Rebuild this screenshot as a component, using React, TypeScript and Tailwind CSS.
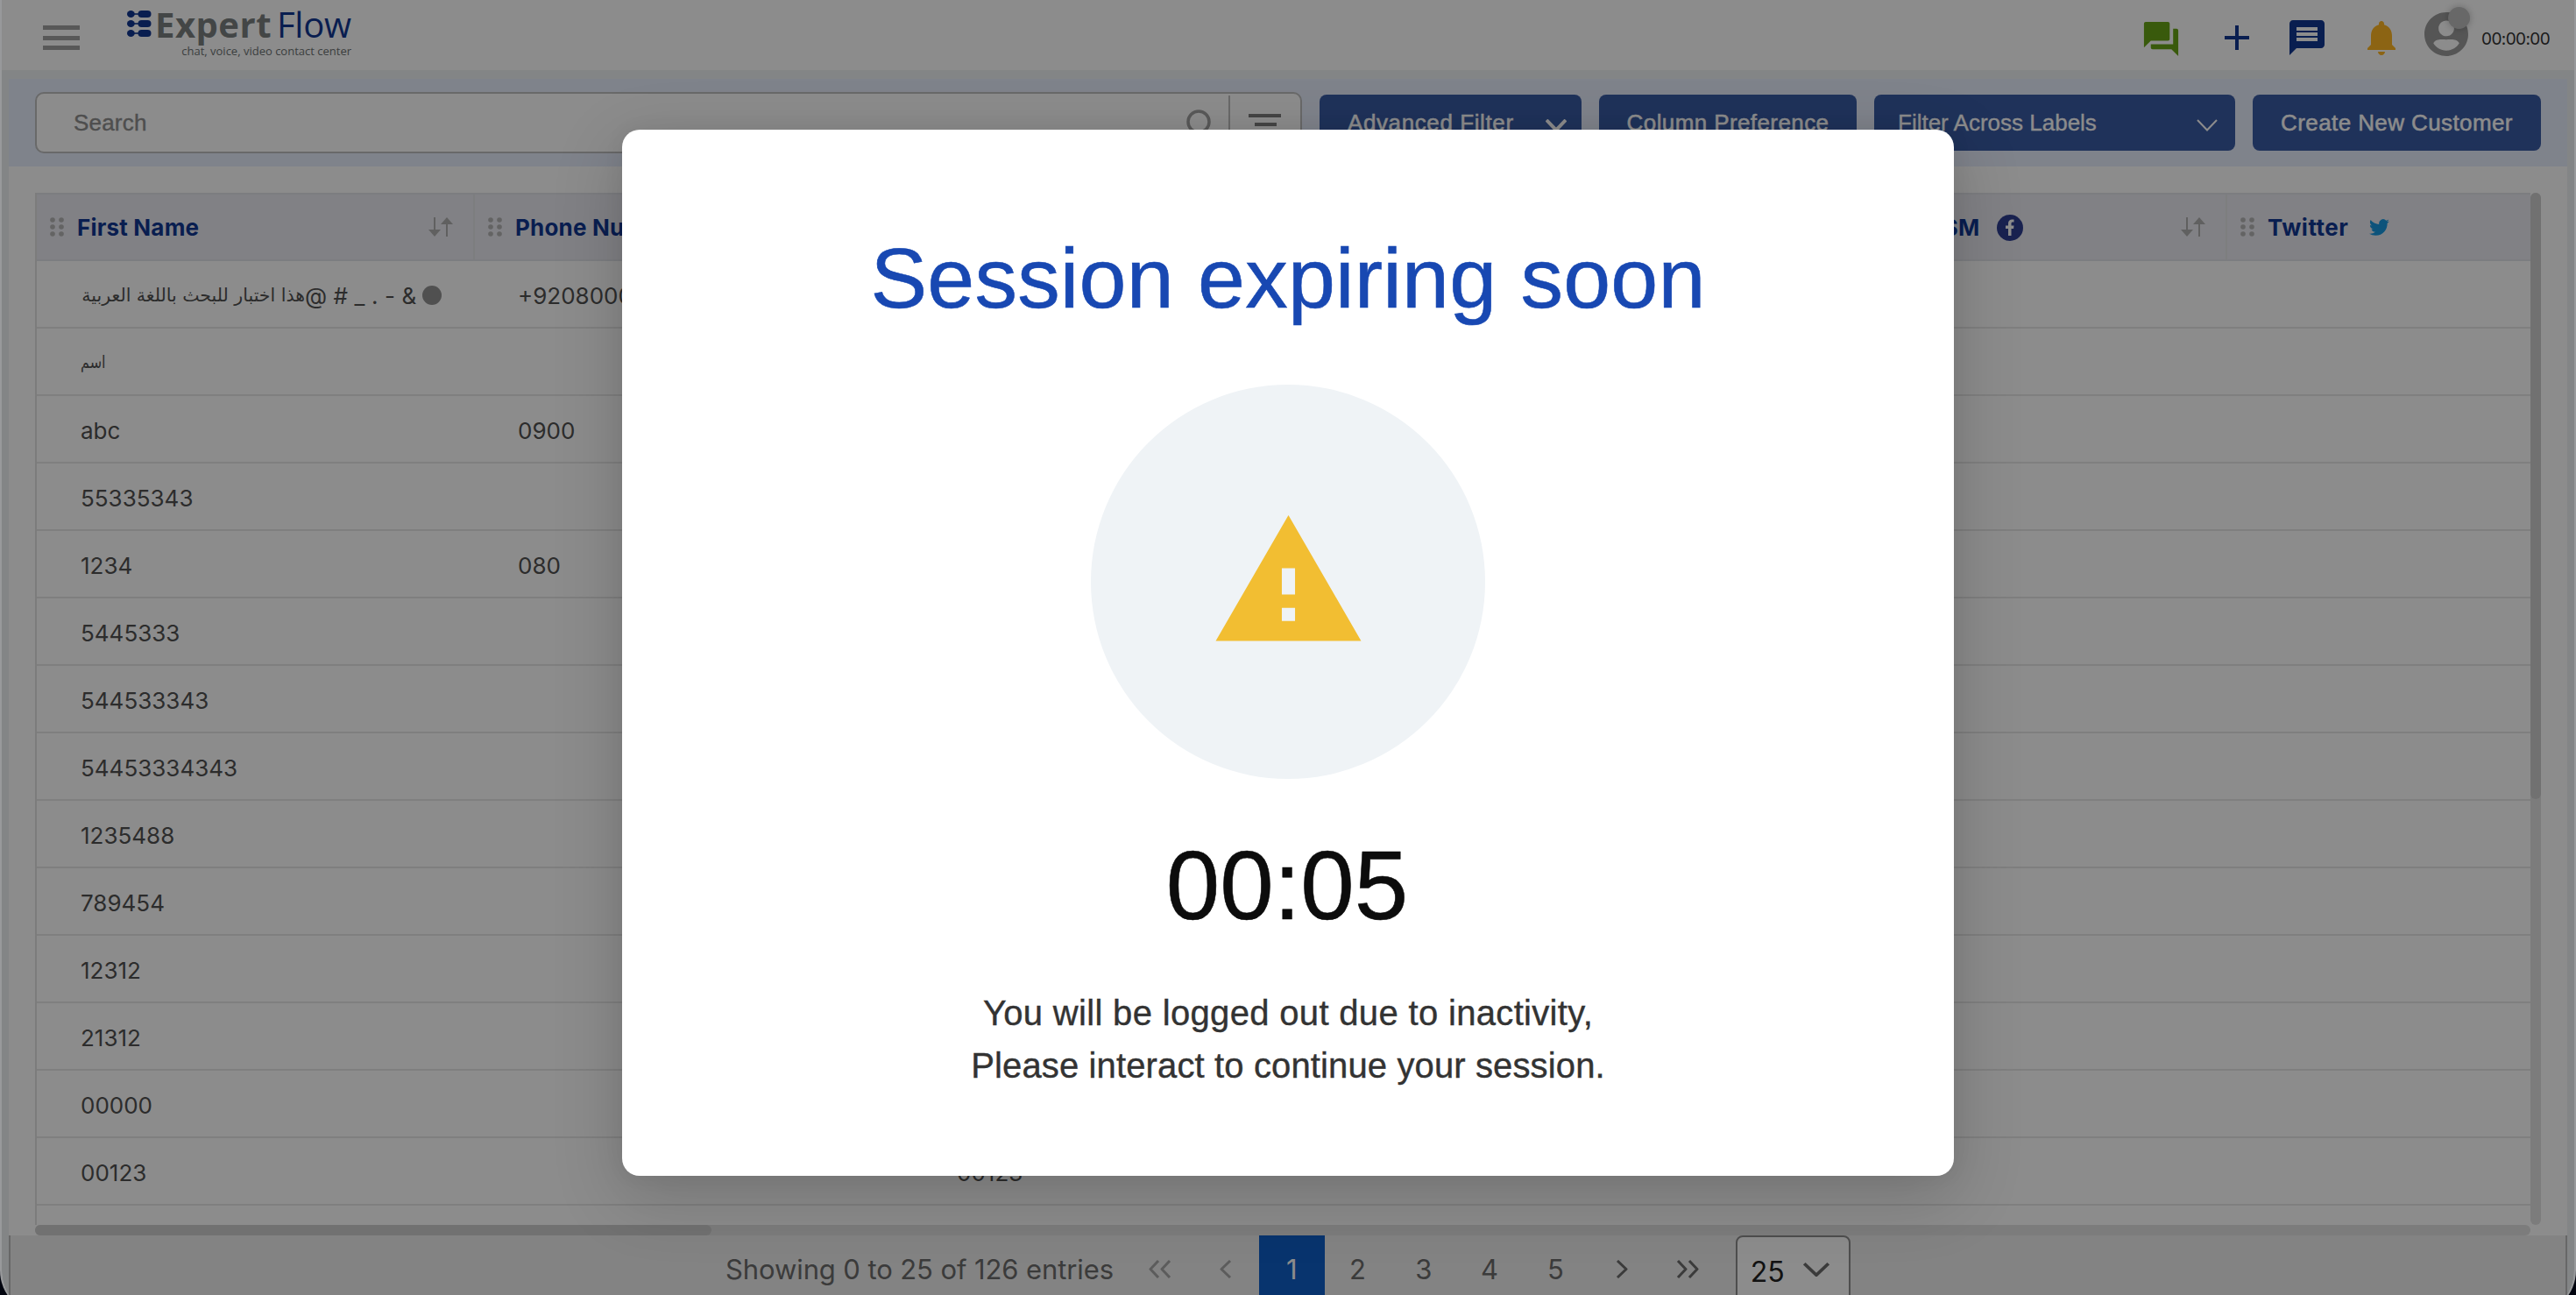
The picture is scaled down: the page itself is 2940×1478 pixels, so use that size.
import React from "react";

const FIRST_NAMES = [
  "اسم", "abc", "55335343", "1234", "5445333", "544533343", "54453334343",
  "1235488", "789454", "12312", "21312", "00000", "00123", "",
];
const PHONES: Record<number, string> = { 1: "0900", 3: "080" };
const THIRD: Record<number, string> = { 12: "00123" };

function Grip() {
  return (
    <svg className="h-[22px] w-4 shrink-0" viewBox="0 0 16 22" fill="#b4b4b4">
      {[3, 11, 19].map((y) => (
        <g key={y}><circle cx="3" cy={y} r="2.8" /><circle cx="13" cy={y} r="2.8" /></g>
      ))}
    </svg>
  );
}

function Sort() {
  return (
    <svg className="h-[22px] w-7 shrink-0" viewBox="0 0 28 22" fill="#b0b0b0">
      <path d="M6 0h2v14h6l-7 8-7-8h6z" />
      <path d="M20 22h2V8h6l-7-8-7 8h6z" />
    </svg>
  );
}

function Chevron({ className, width }: { className: string; width: number }) {
  return (
    <svg className={className} viewBox="0 0 24 14" preserveAspectRatio="none" fill="none" stroke="currentColor" strokeWidth={width}>
      <path d="M1 1l11 11.5L23 1" />
    </svg>
  );
}

function Angle({ flip, double, muted }: { flip?: boolean; double?: boolean; muted?: boolean }) {
  return (
    <span className={muted ? "flex w-[75.3px] justify-center text-[#a8a8a8]" : "flex w-[75.3px] justify-center text-[#6c6c6c]"}>
      <svg className={flip ? "h-[21px] w-[26px] -scale-x-100" : "h-[21px] w-[26px]"} viewBox="0 0 26 21" fill="none" stroke="currentColor" strokeWidth="3" strokeLinejoin="round">
        {double ? <path d="M2 1l9 9.5L2 20M15 1l9 9.5L15 20" /> : <path d="M8 1l10 9.5L8 20" />}
      </svg>
    </span>
  );
}

function Logo() {
  return (
    <div className="ml-[54px] mt-[7px] w-[256px]">
      <div className="flex h-[42px] items-center">
        <svg className="mt-[-2px] h-[30px] w-7 shrink-0" viewBox="0 0 28 30" fill="#123892">
          {[4, 15, 26].map((y) => (
            <g key={y}>
              <ellipse cx="4.4" cy={y} rx="4.4" ry="4" />
              <rect x="8" y={y - 0.8} width="6" height="1.6" />
              <rect x="12.5" y={y - 4} width="15" height="8" rx="4" />
            </g>
          ))}
        </svg>
        <span className="ml-1 w-[139px] whitespace-nowrap font-['Open_Sans'] text-[40px] font-bold leading-[42px] tracking-[0.5px] text-[#7a8080]">Expert</span>
        <span className="whitespace-nowrap font-['Open_Sans'] text-[40px] leading-[42px] tracking-[-0.3px] text-[#123892]">Flow</span>
      </div>
      <div className="text-right font-['Open_Sans'] text-[13px] leading-[18px] text-[#6d7373]">chat, voice, video contact center</div>
    </div>
  );
}

function Header() {
  return (
    <header className="flex h-20 shrink-0 bg-white">
      <div className="ml-[47px] mt-[29px] flex h-7 w-[42px] flex-col justify-between">
        <i className="h-[5px] bg-[#a0a0a0]" /><i className="h-[5px] bg-[#a0a0a0]" /><i className="h-[5px] bg-[#a0a0a0]" />
      </div>
      <Logo />
      <div className="ml-auto flex pr-[29px]">
        <svg className="mt-[21px] h-[47px] w-[47px]" viewBox="0 0 24 24" fill="#69a416">
          <path d="M21 6h-2v9H6v2c0 .55.45 1 1 1h11l4 4V7c0-.55-.45-1-1-1zm-4 6V3c0-.55-.45-1-1-1H3c-.55 0-1 .45-1 1v14l4-4h10c.55 0 1-.45 1-1z" />
        </svg>
        <svg className="ml-[39px] mt-[19px] h-12 w-12" viewBox="0 0 24 24" fill="#123892"><path d="M19 13h-6v6h-2v-6H5v-2h6V5h2v6h6v2z" /></svg>
        <svg className="ml-[32px] mt-[19px] h-12 w-12" viewBox="0 0 24 24" fill="#123892">
          <path d="M20 2H4c-1.1 0-1.99.9-1.99 2L2 22l4-4h14c1.100 0 2-.9 2-2V4c0-1.100-.9-2-2-2zm-2 12H6v-2h12v2zm0-3H6V9h12v2zm0-3H6V6h12v2z" />
        </svg>
        <svg className="ml-[37px] mt-[19px] h-12 w-12" viewBox="0 0 24 24" fill="#ffb624">
          <path d="M12 22c1.100 0 2-.9 2-2h-4c0 1.100.89 2 2 2zm6-6v-5c0-3.070-1.640-5.640-4.500-6.320V4c0-.83-.67-1.500-1.500-1.500s-1.500.67-1.500 1.500v.68C7.630 5.360 6 7.920 6 11v5l-2 2v1h16v-1l-2-2z" />
        </svg>
        <div className="relative ml-5 mt-[9px] h-[60px] w-[60px]">
          <svg viewBox="0 0 24 24" fill="#9c9c9c"><path d="M12 2C6.480 2 2 6.480 2 12s4.480 10 10 10 10-4.480 10-10S17.520 2 12 2zm0 3.800c1.960 0 3.550 1.590 3.550 3.550s-1.590 3.550-3.550 3.550-3.550-1.590-3.550-3.550 1.590-3.550 3.550-3.550zm0 13.700c-2.500 0-4.900-1.500-5.900-3.400 1.300-2.200 3.800-1.600 5.900-1.600s4.600-.6 5.900 1.600c-1 1.900-3.400 3.400-5.900 3.400z" /></svg>
          <i className="absolute left-[32px] top-[-1px] h-[25px] w-[25px] rounded-full bg-[#bdbdbd] shadow-[0_0_6px_2px_rgba(0,0,0,0.15)]" />
        </div>
        <span className="ml-[10px] mt-[33px] w-[77px] whitespace-nowrap text-[19px] leading-6 tracking-[-0.6px] text-[#333]">00:00:00</span>
      </div>
    </header>
  );
}

const btn = "flex h-16 shrink-0 items-center rounded-lg bg-[#3a5ba4] whitespace-nowrap text-[26px] text-white";

function Toolbar() {
  return (
    <div className="flex h-[100px] shrink-0 items-start bg-[#e7eefd] pl-[30px] pt-[15px] font-['Liberation_Sans',sans-serif]">
      <div className="flex h-[70px] w-[1446px] items-center rounded-[10px] border-2 border-[#bfbfbf] bg-white">
        <span className="ml-[42px] text-[26px] tracking-[0.2px] text-[#8f8f8f] [-webkit-text-stroke:0.4px_#8f8f8f]">Search</span>
        <svg className="ml-auto h-8 w-8" viewBox="0 0 32 32" fill="none" stroke="#a2a2a2" strokeWidth="3.500"><circle cx="16" cy="15" r="12" /><path d="M24 24l7 7" /></svg>
        <i className="ml-[18px] h-[62px] w-0.5 bg-[#bfbfbf]" />
        <svg className="ml-[21px] mr-[21px] h-7 w-[38px]" viewBox="0 0 38 28" fill="#7f7f7f"><path d="M0 4h37v4H0zM7 14h25v4H7zM14 24h10v4H14z" /></svg>
      </div>
      <div className="ml-5 mt-[3px] flex">
        <button className={btn + " w-[299px] pl-8"}>
          <span className="tracking-[0.6px] [-webkit-text-stroke:0.5px_white]">Advanced Filter</span><Chevron className="ml-auto mr-[17px] mt-1.5 h-[14px] w-6" width={4} />
        </button>
        <button className={btn + " ml-5 w-[294px] justify-center"}><span className="tracking-[0.4px] [-webkit-text-stroke:0.5px_white]">Column Preference</span></button>
        <button className={btn + " ml-5 w-[412px] pl-[27px]"}><span className="[-webkit-text-stroke:0.3px_white]">Filter Across Labels</span><Chevron className="ml-auto mr-5 mt-1.5 h-[14px] w-6" width={2} /></button>
        <button className={btn + " ml-5 w-[329px] justify-center"}><span className="tracking-[0.4px] [-webkit-text-stroke:0.5px_white]">Create New Customer</span></button>
      </div>
    </div>
  );
}

function HeadCell({ children, last }: { children?: React.ReactNode; last?: boolean }) {
  return (
    <div className={last ? "flex flex-1 items-center pl-[15px]" : "flex w-[500px] shrink-0 items-center border-r-2 border-[#e4e5e8] pl-[15px] pr-[23px]"}>
      <Grip />
      <span className="ml-[15px] flex flex-1 items-center whitespace-nowrap pt-px text-[26px] font-bold tracking-[0.2px] text-[#123892]">{children}</span>
      {!last && <Sort />}
    </div>
  );
}

function Table() {
  return (
    <div className="ml-[30px] mt-[30px] flex h-[1190px] w-[2860px] flex-wrap content-start">
      <div className="flex h-[1178px] w-[2848px] flex-col overflow-hidden border-l-2 border-[#e2e2e2]">
        <div className="flex h-[78px] shrink-0 border-y-2 border-[#e2e4ea] bg-[#ebecf2]">
          <HeadCell>First Name</HeadCell>
          <HeadCell>Phone Number</HeadCell>
          <HeadCell>Email</HeadCell>
          <HeadCell>Labels</HeadCell>
          <HeadCell>
            Channel<span className="ml-[23px]">SM</span>
            <svg className="ml-5 h-[30px] w-[30px]" viewBox="0 0 30 30"><circle cx="15" cy="15" r="15" fill="#2f3e92" /><path d="M13 24v-8h-3v-3.500h3v-2.500c0-3 1.800-4.500 4.400-4.500 1 0 1.800.1 2.100.1v3h-1.500c-1.200 0-1.500.6-1.500 1.500v2.400h3l-.4 3.500h-2.600v8z" fill="#fff" /></svg>
          </HeadCell>
          <HeadCell last>
            <span className="tracking-[0.5px]">Twitter</span>
            <svg className="ml-6 h-[23px] w-[23px]" viewBox="0 0 24 24" fill="#1798e0"><path d="M23.950 4.570a10 10 0 0 1-2.820.77 4.960 4.960 0 0 0 2.160-2.720c-.95.55-2 .96-3.130 1.180a4.920 4.920 0 0 0-8.380 4.480C7.690 8.090 4.070 6.130 1.640 3.160a4.820 4.820 0 0 0-.67 2.480c0 1.710.87 3.210 2.190 4.100a4.900 4.900 0 0 1-2.230-.62v.06a4.920 4.920 0 0 0 3.950 4.830 5 5 0 0 1-2.210.08 4.940 4.940 0 0 0 4.600 3.420A9.870 9.870 0 0 1 0 19.540a13.990 13.990 0 0 0 7.550 2.210c9.050 0 14-7.500 14-13.980 0-.21 0-.42-.02-.63a9.940 9.940 0 0 0 2.460-2.550z" /></svg>
          </HeadCell>
        </div>
        <div className="flex h-[77px] shrink-0 items-center border-b-2 border-[#e8e8e8] pt-[3px] text-[26px] text-[#515151]">
          <div className="flex w-[500px] items-center whitespace-nowrap pl-[50px]">
            <bdi dir="rtl" className="w-[256px] font-['DejaVu_Sans','Inter'] text-[20.5px]">هذا اختبار للبحث باللغة العربية</bdi>
            <span className="tracking-[0.1px]">@ # _ . - &amp;</span><i className="ml-[7px] h-[22px] w-[22px] rounded-full bg-[#929292]" />
          </div>
          <div className="w-[500px] pl-[49px]">+92080005643</div>
        </div>
        {FIRST_NAMES.map((name, i) => (
          <div key={i} className="flex h-[77px] shrink-0 items-center border-b-2 border-[#e8e8e8] pt-[3px] text-[26px] text-[#515151]">
            <div className={i === 0 ? "w-[500px] scale-y-120 pl-[50px] font-['DejaVu_Sans'] text-[16px]" : "w-[500px] pl-[50px]"}>{name}</div>
            <div className="w-[500px] pl-[49px]">{PHONES[i]}</div>
            <div className="w-[500px] pl-[50px]">{THIRD[i]}</div>
          </div>
        ))}
      </div>
      <div className="h-[1178px] w-3 rounded-full bg-[#e2e2e2]"><div className="h-[692px] rounded-full bg-[#cecece]" /></div>
      <div className="h-3 w-[2848px] rounded-full bg-[#e2e2e2]"><div className="h-3 w-[772px] rounded-full bg-[#cecece]" /></div>
    </div>
  );
}

function Pager() {
  return (
    <footer className="flex h-[90px] shrink-0 items-start border-x-2 border-[#bcbcbc] bg-[#efefef] pl-[816px] text-[31px] text-[#6c6c6c]">
      <div className="flex h-[76px] items-center">
        <span className="w-[458px] whitespace-nowrap pt-0.5 tracking-[-0.1px]">Showing 0 to 25 of 126 entries</span>
        <Angle flip double muted />
        <Angle flip muted />
        <span className="flex h-full w-[75.3px] items-center justify-center bg-[#0f5fc8] pt-0.5 text-white">1</span>
        {[2, 3, 4, 5].map((n) => <span key={n} className="w-[75.3px] pt-0.5 text-center">{n}</span>)}
        <Angle />
        <Angle double />
        <div className="ml-[17px] flex h-[84px] w-[131px] items-center self-start rounded-lg border-2 border-[#8e8e8e] bg-white pl-[15px] pr-[22px] text-[32px] text-[#222]">
          25<Chevron className="ml-auto mt-[-6px] h-4 w-[30px] text-[#6c6c6c]" width={3} />
        </div>
      </div>
    </footer>
  );
}

function SessionDialog() {
  return (
    <div className="flex h-[1194px] w-[1520px] flex-col items-center rounded-[20px] bg-white font-['Liberation_Sans',Arial,sans-serif] shadow-[0_22px_76px_6px_rgba(0,0,0,0.16),0_0_24px_rgba(0,0,0,0.05)]">
      <h1 className="mt-[114px] whitespace-nowrap text-[97px] leading-[112px] tracking-[0.2px] text-[#1848b2] [-webkit-text-stroke:0.6px_#1848b2]">Session expiring soon</h1>
      <div className="mt-[65px] flex h-[450px] w-[450px] items-center justify-center rounded-full bg-[#eff3f6]">
        <svg className="mt-[-2px] h-[181px] w-[181px]" viewBox="0 0 24 24" fill="#f2be32"><path d="M1 21h22L12 2 1 21zm12-3h-2v-2h2v2zm0-4h-2v-4h2v4z" /></svg>
      </div>
      <div className="mt-[59px] pr-0.5 text-[110.5px] leading-[126px] text-[#0c0c0c] [-webkit-text-stroke:0.6px_#0c0c0c]">00:05</div>
      <p className="mt-[52px] whitespace-nowrap text-center text-[40px] leading-[60px] text-[#333] [-webkit-text-stroke:0.4px_#333]">
        <span className="tracking-[0.33px]">You will be logged out due to inactivity,</span><br />
        <span className="tracking-[0.13px]">Please interact to continue your session.</span>
      </p>
    </div>
  );
}

export default function App() {
  return (
    <div className="h-[1478px] w-[2940px] overflow-hidden bg-[#02050f] font-['Inter',sans-serif]">
      <div className="relative flex h-[1500px] flex-col overflow-hidden rounded-b-[50px] border-x-2 border-[#98999b] bg-[#eef2f4]">
        <Header />
        <div className="mx-2 mt-2.5 flex flex-1 flex-col bg-[#efefef]">
          <div className="bg-white">
            <Toolbar />
            <Table />
          </div>
          <Pager />
        </div>
        <div className="absolute inset-0 flex items-start justify-center bg-black/45 pt-[148px]"><SessionDialog /></div>
      </div>
    </div>
  );
}
